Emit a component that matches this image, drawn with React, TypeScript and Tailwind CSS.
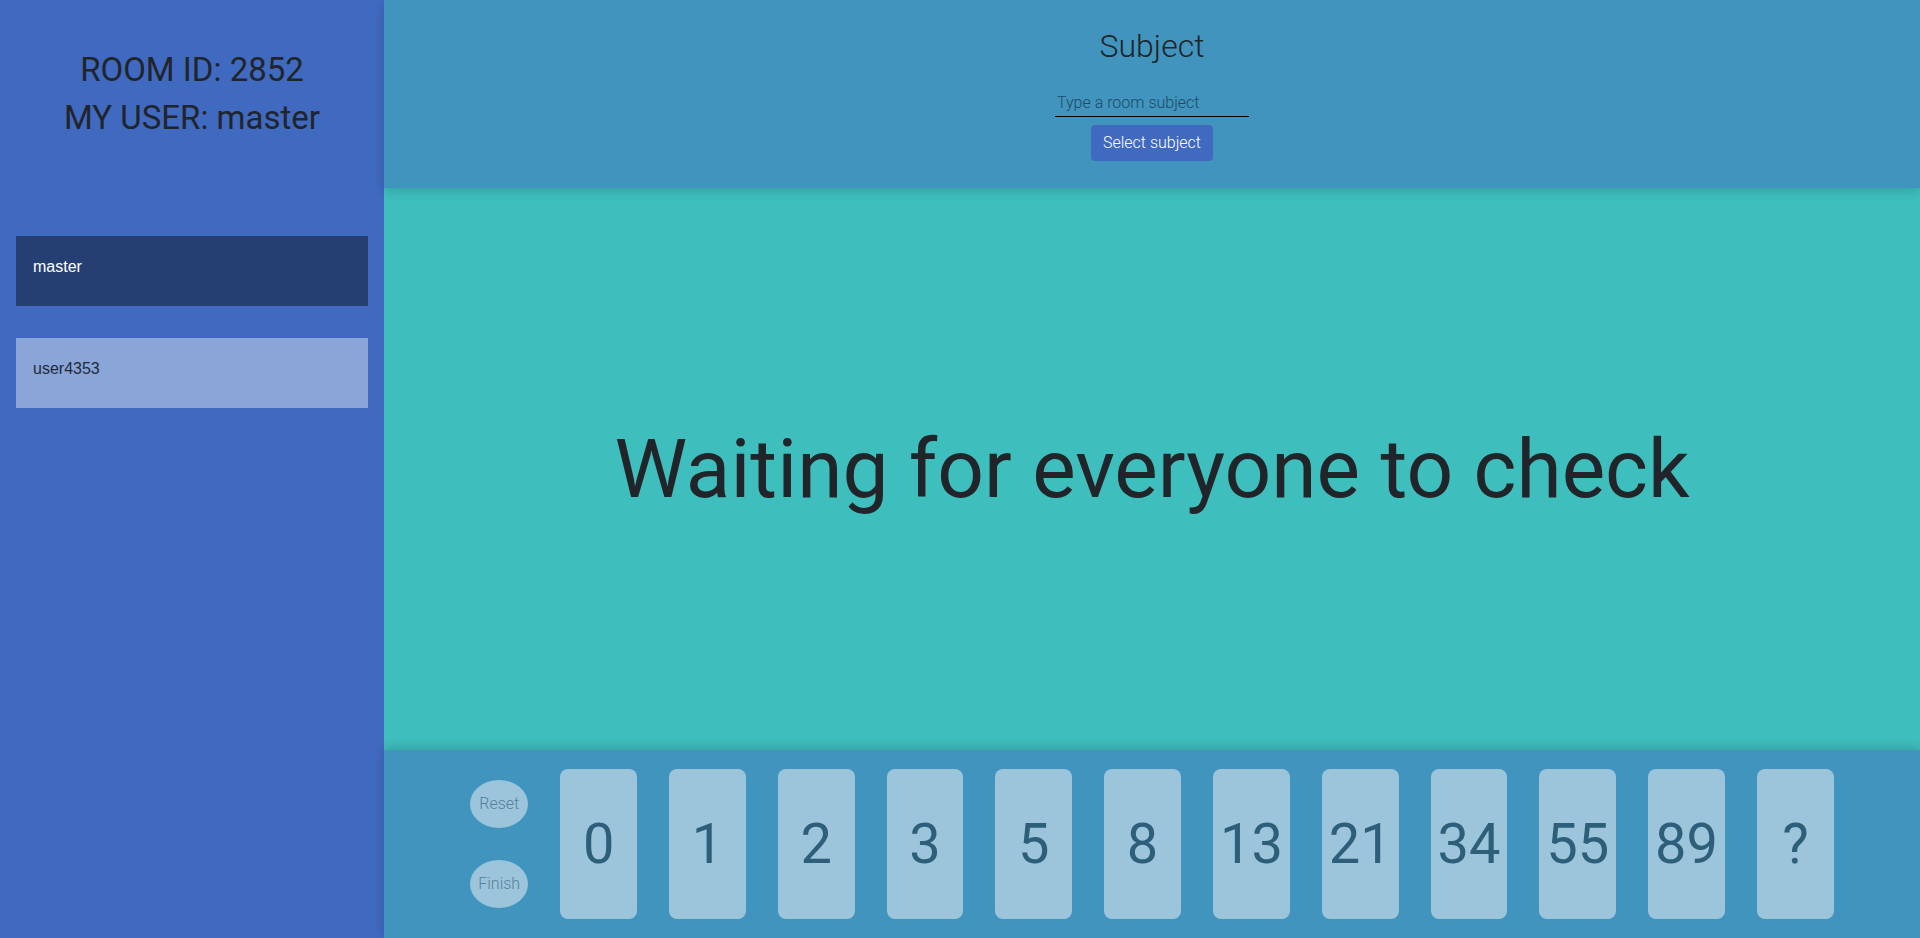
import { useState } from "react";

const users = [
  { id: 1, name: "master", me: true },
  { id: 2, name: "user4353", me: false },
];

const values = ["0", "1", "2", "3", "5", "8", "13", "21", "34", "55", "89", "?"];

const Sidebar = () => (
  <aside className="flex w-[384px] shrink-0 flex-col bg-[#4069c0]">
    <h1 className="pt-[46px] text-center text-[33px] leading-[48px] font-normal text-[#212529]">
      ROOM ID: 2852
      <br />
      MY USER: master
    </h1>
    <ul className="mt-[94px] flex flex-col gap-8 px-4">
      {users.map((u) => (
        <li
          key={u.id}
          className={`h-[70px] px-[17px] py-[19px] font-['Liberation_Sans',Arial,sans-serif] text-base leading-6 ${
            u.me ? "bg-[#253f72] text-white" : "bg-[#8aa5d8] text-[#1f2a3a]"
          }`}
        >
          {u.name}
        </li>
      ))}
    </ul>
  </aside>
);

const SubjectBar = () => {
  const [subject, setSubject] = useState("");

  return (
    <header className="relative z-10 flex h-[188px] shrink-0 flex-col items-center bg-[#4094bd] pt-[27px] shadow-[0_3px_10px_rgba(0,0,0,0.16)]">
      <h2 className="text-[32px] leading-[38px] font-light text-[#212529]">Subject</h2>
      <input
        value={subject}
        onChange={(e) => setSubject(e.target.value)}
        placeholder="Type a room subject"
        className="mt-6 h-7 w-[194px] border-b border-black bg-transparent px-0.5 text-base font-light text-[#212529] outline-none placeholder:text-[#1f4a66]"
      />
      <button className="mt-2 h-9 w-[122px] rounded bg-[#4069c0] text-base font-light text-white">
        Select subject
      </button>
    </header>
  );
};

const PickBar = () => {
  const [picked, setPicked] = useState<string | null>(null);

  return (
    <footer className="relative z-10 flex h-[188px] shrink-0 items-center justify-center gap-8 bg-[#4094bd] shadow-[0_-3px_10px_rgba(0,0,0,0.16)]">
      <div className="flex h-32 w-[58px] flex-col justify-between">
        <button className="h-12 w-[58px] rounded-[50%] bg-[#9cc4da] text-base font-light text-[#55819b]">
          Reset
        </button>
        <button className="h-12 w-[58px] rounded-[50%] bg-[#9cc4da] text-base font-light text-[#55819b]">
          Finish
        </button>
      </div>
      {values.map((v) => (
        <button
          key={v}
          onClick={() => setPicked(v)}
          className={`flex h-[150px] w-[76.8px] items-center justify-center rounded-lg text-[56px] leading-none font-normal text-[#2d5e7a] ${
            picked === v ? "bg-[#c4dde9]" : "bg-[#9cc4da]"
          }`}
        >
          {v}
        </button>
      ))}
    </footer>
  );
};

export default function App() {
  return (
    <div className="flex h-screen w-full overflow-hidden font-['Roboto',sans-serif]">
      <Sidebar />
      <main className="flex min-w-0 flex-1 flex-col">
        <SubjectBar />
        <section className="flex flex-1 items-center justify-center bg-[#3fbebe]">
          <p className="text-[82px] leading-none font-normal text-[#212529]">
            Waiting for everyone to check
          </p>
        </section>
        <PickBar />
      </main>
    </div>
  );
}
